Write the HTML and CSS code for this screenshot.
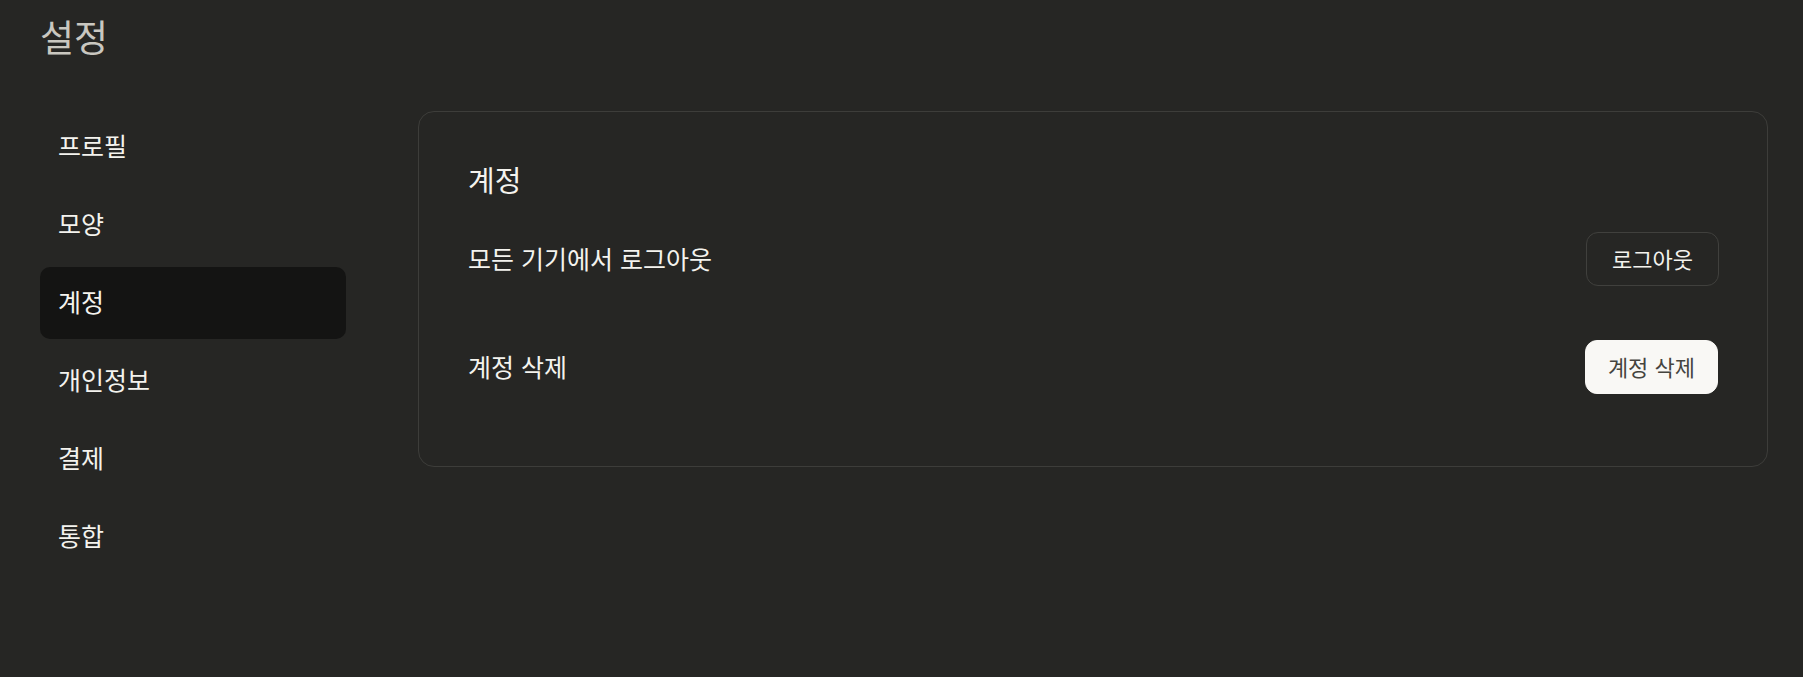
FILE: index.html
```html
<!DOCTYPE html>
<html lang="ko">
<head>
<meta charset="utf-8">
<title>설정</title>
<link rel="stylesheet" href="styles.css">
</head>
<body>
<div class="page">
  <h1 class="page-title">설정</h1>
  <div class="layout">
    <nav class="sidebar">
      <a class="nav-item">프로필</a>
      <a class="nav-item">모양</a>
      <a class="nav-item active">계정</a>
      <a class="nav-item">개인정보</a>
      <a class="nav-item">결제</a>
      <a class="nav-item">통합</a>
    </nav>
    <section class="card">
      <h2 class="card-title">계정</h2>
      <div class="row">
        <span class="row-label">모든 기기에서 로그아웃</span>
        <button class="btn btn-outline">로그아웃</button>
      </div>
      <div class="row">
        <span class="row-label">계정 삭제</span>
        <button class="btn btn-light">계정 삭제</button>
      </div>
    </section>
  </div>
</div>
</body>
</html>
```
FILE: styles.css
```css
html, body {
  margin: 0;
  padding: 0;
  background: #262624;
  font-family: "Noto Sans CJK KR", "Noto Sans", sans-serif;
  color: #f2f1ec;
}
.page {
  padding: 11px 35px 0 40px;
}
.page-title {
  margin: 0 0 49px 0;
  font-size: 37px;
  line-height: 51px;
  font-weight: 400;
  color: #c9c7c0;
}
.layout {
  display: grid;
  grid-template-columns: 306px 1fr;
  column-gap: 72px;
  align-items: start;
}
.sidebar {
  display: flex;
  flex-direction: column;
  gap: 6px;
}
.nav-item {
  display: flex;
  align-items: center;
  box-sizing: border-box;
  height: 72px;
  padding: 0 0 4px 18px;
  border-radius: 10px;
  font-size: 25px;
  color: #f4f3ee;
}
.nav-item.active {
  background: #141413;
}
.card {
  border: 1px solid #3d3d3a;
  border-radius: 16px;
  padding: 47px 48px 45px 49px;
}
.card-title {
  margin: 0 0 6px 0;
  font-size: 29px;
  line-height: 40px;
  font-weight: 400;
  color: #f4f3ee;
}
.row {
  display: flex;
  align-items: center;
  justify-content: space-between;
  padding: 27px 0;
}
.row-label {
  font-size: 25px;
  color: #f4f3ee;
  padding-bottom: 3px;
}
.btn {
  box-sizing: border-box;
  height: 54px;
  padding: 0 25px 2px;
  border-radius: 12px;
  font-family: inherit;
  font-size: 22px;
  cursor: pointer;
}
.btn-outline {
  background: transparent;
  border: 1px solid #40403d;
  color: #f4f3ee;
}
.btn-light {
  background: #f9f8f5;
  border: 1px solid #f9f8f5;
  color: #45443f;
  padding: 0 22px 2px;
  margin-right: 1px;
}
```
